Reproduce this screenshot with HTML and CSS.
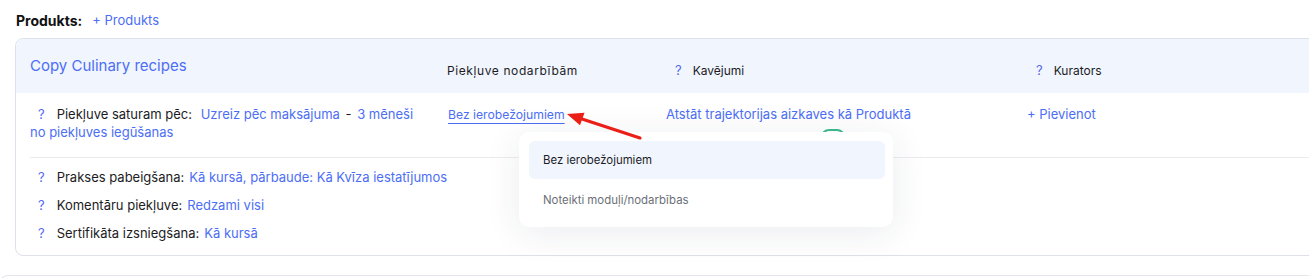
FILE: index.html
```html
<!DOCTYPE html>
<html lang="lv">
<head>
  <meta charset="UTF-8" />
  <title>Produkts</title>
  <link rel="stylesheet" href="styles.css">
</head>
<body>
  <div class="section-title">
    <span class="heading">Produkts:</span>
    <a href="#" class="add-link">+ Produkts</a>
  </div>

  <div class="card">
    <div class="card-head grid">
      <div class="product-name">Copy Culinary recipes</div>
      <div class="col-label wide">Piekļuve nodarbībām</div>
      <div class="col-label pad"><span class="q">?</span>Kavējumi</div>
      <div class="col-label pad"><span class="q">?</span>Kurators</div>
    </div>

    <div class="row-main grid">
      <div class="access-text">
        <span class="q q-row">?</span><span class="lbl">Piekļuve saturam pēc:</span>
        <a href="#" class="link">Uzreiz pēc maksājuma</a> <span class="dash">-</span>
        <a href="#" class="link">3 mēneši no piekļuves iegūšanas</a>
      </div>
      <div class="cell-access">
        <a href="#" class="link underline">Bez ierobežojumiem</a>
        <svg class="arrow" width="84" height="38" viewBox="0 0 84 38">
          <line x1="19" y1="12" x2="77" y2="31" stroke="#ea1f17" stroke-width="3.2" stroke-linecap="round" />
          <polygon points="4,7 21.5,5.8 17,18.2" fill="#ea1f17" />
        </svg>
        <div class="dropdown">
          <div class="dd-item active">Bez ierobežojumiem</div>
          <div class="dd-item">Noteikti moduļi/nodarbības</div>
        </div>
      </div>
      <div class="cell-delay">
        <a href="#" class="link">Atstāt trajektorijas aizkaves kā Produktā</a>
        <div class="toggle"></div>
      </div>
      <div>
        <a href="#" class="link">+ Pievienot</a>
      </div>
    </div>

    <div class="settings">
      <div class="set-row"><span class="q q-row">?</span><span class="lbl">Prakses pabeigšana:</span><a href="#" class="link">Kā kursā, pārbaude: Kā Kvīza iestatījumos</a></div>
      <div class="set-row"><span class="q q-row">?</span><span class="lbl">Komentāru piekļuve:</span><a href="#" class="link">Redzami visi</a></div>
      <div class="set-row"><span class="q q-row">?</span><span class="lbl">Sertifikāta izsniegšana:</span><a href="#" class="link">Kā kursā</a></div>
    </div>
  </div>

  <div class="next-block"></div>
</body>
</html>
```

FILE: styles.css
```css
html, body {
  margin: 0;
  padding: 0;
  background-color: white;
  font-family: Inter, "Noto Sans", Arial, sans-serif;
  color: #1c1c1e;
  overflow: hidden;
}
body {
  padding: 0 0 0 16px;
}
a {
  text-decoration: none;
}
.section-title {
  height: 20px;
  margin-top: 10px;
  display: flex;
  align-items: center;
}
.heading {
  font-size: 14px;
  font-weight: 700;
  color: #111;
}
.add-link {
  color: #4c6ef5;
  font-size: 13px;
  margin-left: 10px;
}
.card {
  margin-top: 8px;
  margin-right: -40px;
  margin-left: -1px;
  border: 1px solid #dfe1ea;
  border-radius: 8px;
}
.grid {
  display: grid;
  grid-template-columns: 417px 219px 361px 1fr;
}
.card-head {
  background-color: #f1f5fe;
  height: 54px;
  padding-left: 14px;
  align-items: center;
  border-radius: 8px 8px 0 0;
}
.product-name {
  color: #4c6ef5;
  font-size: 15px;
  margin-top: -2px;
}
.col-label {
  font-size: 12px;
  color: #1c1c1e;
  padding-top: 8px;
}
.col-label.wide {
  letter-spacing: 0.6px;
}
.col-label.pad {
  padding-left: 9px;
}
.q {
  color: #5468f0;
  font-size: 13px;
  margin-right: 11px;
}
.q-row {
  margin-left: 8px;
  margin-right: 12px;
}
.link {
  color: #4c6ef5;
}
.underline {
  font-size: 12.2px;
  text-decoration: underline;
  text-underline-offset: 4px;
  text-decoration-thickness: 1px;
}
.row-main {
  font-size: 13px;
  line-height: 18px;
  padding-top: 12px;
  padding-bottom: 16px;
  margin-left: 14px;
  border-bottom: 1px solid #ececf0;
}
.access-text {
  padding-right: 22px;
}
.lbl {
  margin-right: 5px;
}
.dash {
  margin: 0 2px;
}
.cell-access {
  position: relative;
  padding-left: 1px;
}
.arrow {
  position: absolute;
  left: 116px;
  top: 2px;
  z-index: 3;
}
.dropdown {
  position: absolute;
  left: 72px;
  top: 27px;
  width: 356px;
  padding: 9px 8px 8px 10px;
  background-color: white;
  border-radius: 10px;
  box-shadow: 0 6px 36px rgba(30, 40, 80, 0.09);
  z-index: 2;
}
.dd-item {
  height: 38px;
  line-height: 38px;
  padding-left: 14px;
  font-size: 11.4px;
  color: #6b6f78;
  border-radius: 6px;
}
.dd-item.active {
  background-color: #f1f5fe;
  color: #1c1c1e;
  margin-bottom: 2px;
}
.toggle {
  width: 20px;
  height: 12px;
  border: 2px solid #3dbb8c;
  border-radius: 8px;
  margin: 6px 0 -20px 155px;
}
.settings {
  padding: 10px 0 13px 14px;
  font-size: 13px;
  line-height: 18px;
  display: flex;
  flex-direction: column;
  gap: 10px;
}
.next-block {
  margin-top: 19px;
  margin-left: -16px;
  height: 20px;
  border-top: 1px solid #e6e7ec;
  border-left: 1px solid #e6e7ec;
  border-radius: 8px 0 0 0;
}
```
